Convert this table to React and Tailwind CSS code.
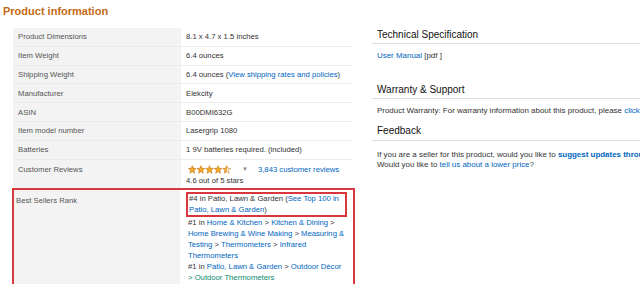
import React from 'react';

const STAR = '5,0.6 6.2,3.6 9.5,3.8 7,5.9 7.8,9.3 5,7.5 2.2,9.3 3,5.9 0.5,3.8 3.8,3.6';

const Stars = () => (
  <svg width="43" height="9" viewBox="0 0 50 10">
    <defs>
      <linearGradient id="half">
        <stop offset="55%" stopColor="#f4a82a" />
        <stop offset="55%" stopColor="#fff" />
      </linearGradient>
    </defs>
    {[0, 1, 2, 3, 4].map((i) => (
      <polygon
        key={i}
        points={STAR}
        transform={`translate(${i * 10} 0)`}
        fill={i === 4 ? 'url(#half)' : '#f4a82a'}
        stroke="#c7740f"
        strokeWidth="0.7"
      />
    ))}
  </svg>
);

const Row = ({ label, children }) => (
  <div className="flex h-[18.8px] border-b border-[#ebebeb]">
    <div className="w-[168px] shrink-0 bg-[#f3f3f3] pl-[5px] flex items-center text-[#555]">{label}</div>
    <div className="pl-[5px] flex items-center text-[#333]">{children}</div>
  </div>
);

const A = ({ children, className = '' }) => <span className={`text-[#0066c0] ${className}`}>{children}</span>;

export default function App() {
  return (
    <div className="w-[640px] h-[284px] overflow-hidden bg-white flex font-['Liberation_Sans',Arial,sans-serif]">
      {/* left: product information table */}
      <div className="w-[360px] shrink-0">
        <h2 className="h-[28px] pl-[3px] pt-[4px] text-[11px] leading-[14px] font-bold text-[#c46a14]">Product information</h2>
        <div className="ml-[13px] w-[340px] text-[7.7px] leading-[11px]">
          <Row label="Product Dimensions">8.1 x 4.7 x 1.5 inches</Row>
          <Row label="Item Weight">6.4 ounces</Row>
          <Row label="Shipping Weight">
            <span>6.4 ounces (<A>View shipping rates and policies</A>)</span>
          </Row>
          <Row label="Manufacturer">Elekcity</Row>
          <Row label="ASIN">B00DMI632G</Row>
          <Row label="Item model number">Lasergrip 1080</Row>
          <Row label="Batteries">1 9V batteries required. (included)</Row>
          <div className="flex h-[28.6px]">
            <div className="w-[168px] shrink-0 bg-[#f3f3f3] pl-[5px] pt-[4px] text-[#555]">Customer Reviews</div>
            <div className="pl-[5px] pt-[4px] text-[#333]">
              <div className="flex items-center h-[11px]">
                <span className="ml-[2px]"><Stars /></span>
                <span className="ml-[11px] text-[6px] text-[#888]">▼</span>
                <A className="ml-[10px]">3,843 customer reviews</A>
              </div>
              <div className="h-[11px]">4.6 out of 5 stars</div>
            </div>
          </div>
          <div className="flex h-[100px] -ml-[1px] w-[343px] border-2 border-[#d7373d]">
            <div className="w-[166px] shrink-0 bg-[#f3f3f3] pl-[2px] pt-[5px] text-[#555]">Best Sellers Rank</div>
            <div className="pl-[8px] pr-[6px] pt-[2px] text-[#333]">
              <div className="-ml-[2px] border-2 border-[#d7373d] pl-[1px] leading-[10.5px]">
                #4 in Patio, Lawn &amp; Garden (<A>See Top 100 in Patio, Lawn &amp; Garden</A>)
              </div>
              <div>
                #1 in <A>Home &amp; Kitchen</A> &gt; <A>Kitchen &amp; Dining</A> &gt; <A>Home Brewing &amp; Wine Making</A> &gt; <A>Measuring &amp; Testing</A> &gt; <A>Thermometers</A> &gt; <A>Infrared Thermometers</A>
              </div>
              <div>
                #1 in <A>Patio, Lawn &amp; Garden</A> &gt; <A>Outdoor Décor</A> <span className="text-[#0a8a70]">&gt; Outdoor Thermometers</span>
              </div>
            </div>
          </div>
        </div>
      </div>

      {/* right: spec, warranty, feedback */}
      <div className="flex-1 min-w-0 pt-[25px] pl-[12px] text-[7.95px] leading-[11px] text-[#333]">
        <div className="h-[19px] flex items-center pl-[5px] border-b border-[#dddddd] text-[10px] text-[#111]">Technical Specification</div>
        <div className="mt-[5.5px] pl-[5px]"><A>User Manual</A> [pdf ]</div>
        <div className="mt-[19.5px] h-[19px] flex items-center pl-[5px] border-b border-[#dddddd] text-[10px] text-[#111]">Warranty &amp; Support</div>
        <div className="mt-[6px] pl-[5px] whitespace-nowrap">Product Warranty: For warranty information about this product, please <A>click here</A></div>
        <div className="mt-[5.5px] h-[19px] flex items-center pl-[5px] border-b border-[#dddddd] text-[10px] text-[#111]">Feedback</div>
        <div className="mt-[9px] pl-[5px] leading-[10px] whitespace-nowrap">
          <div>If you are a seller for this product, would you like to <A className="font-bold">suggest updates through seller support</A>?</div>
          <div>Would you like to <A>tell us about a lower price</A>?</div>
        </div>
      </div>
    </div>
  );
}
